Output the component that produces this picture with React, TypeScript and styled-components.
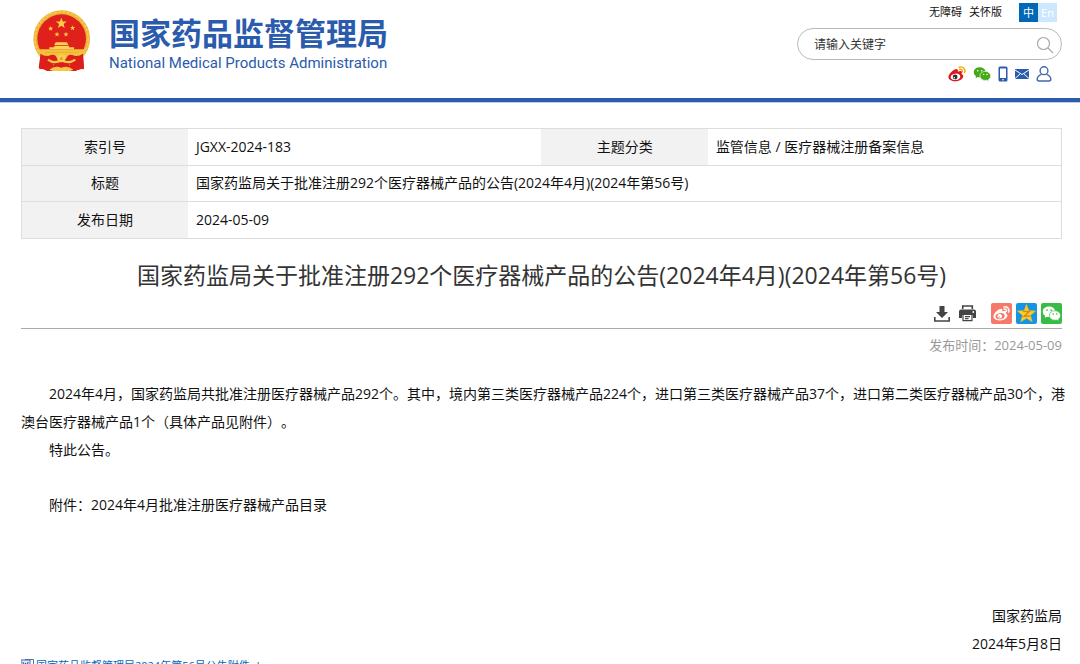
import React from 'react';
import styled, { createGlobalStyle } from 'styled-components';

const latin = '"Open Sans", "Noto Sans CJK SC", sans-serif';

const GlobalStyle = createGlobalStyle`
  * { box-sizing: border-box; }
  body {
    margin: 0;
    background: #fff;
    color: #111;
    font-family: ${latin};
    font-size: 14px;
    text-spacing-trim: space-all;
  }
  a { color: inherit; text-decoration: none; }
  button { border: 0; padding: 0; background: none; font: inherit; cursor: pointer; }
  svg { display: block; }
`;

const Page = styled.div`
  height: 100vh;
  overflow: hidden auto;
  scrollbar-width: none;
`;

const Header = styled.header`
  display: flex;
  justify-content: space-between;
  height: 103px;
  padding: 0 18px 0 32px;
  border-bottom: 1px solid #bccbe6;
  box-shadow: inset 0 -4px #2a5bac;
`;

const Brand = styled.a`
  display: flex;
  align-items: flex-start;
  gap: 17px;
  padding-top: 9px;
  color: #2a5bac;
`;

const BrandText = styled.span`
  display: flex;
  flex-direction: column;
  padding-top: 3px;
  white-space: nowrap;
`;

const BrandName = styled.span`
  font: bold 31px/40px "Noto Sans CJK SC", sans-serif;
`;

const BrandSub = styled.span`
  font: 400 15px/22px Roboto, sans-serif;
`;

const Tools = styled.div`
  display: flex;
  flex-direction: column;
  align-items: flex-end;
  width: 265px;
  padding-top: 2px;
`;

const TopLinks = styled.nav`
  display: flex;
  align-items: center;
  gap: 7px;
  padding-right: 5px;
  font-size: 11px;
  line-height: 20px;
`;

const Languages = styled.div`
  display: flex;
  margin-left: 10px;
`;

const Language = styled.button<{ $active?: boolean }>`
  width: 19px;
  height: 19px;
  font-size: 11px;
  line-height: 19px;
  color: #fff;
  background: ${(p) => (p.$active ? '#0068b7' : '#cce8ff')};
`;

const Search = styled.form`
  display: flex;
  align-items: center;
  width: 100%;
  height: 32px;
  margin-top: 6px;
  padding: 1px 7px 0 16px;
  border: 1px solid #bbb;
  border-radius: 16px;
`;

const SearchInput = styled.input`
  flex: 1;
  min-width: 0;
  padding: 0;
  border: 0;
  outline: 0;
  background: none;
  font: 12px/20px ${latin};
  &::placeholder { color: #333; opacity: 1; }
`;

const Channels = styled.div`
  display: flex;
  align-items: center;
  gap: 7px;
  padding: 5px 10px 0 0;
`;

const Main = styled.main`
  padding: 25px 18px 0 21px;
`;

const InfoTable = styled.table`
  width: 100%;
  height: 111px;
  border-collapse: collapse;
  table-layout: fixed;
  border: 1px solid #ddd;
`;

const InfoRow = styled.tr`
  border-bottom: 1px solid #ddd;
`;

const Label = styled.th`
  padding: 0;
  background: #f2f2f2;
  font-weight: 400;
  line-height: 20px;
`;

const Value = styled.td`
  padding: 0 8px;
  line-height: 20px;
`;

const Title = styled.h1`
  margin: 20px 0 0;
  color: #333;
  font-size: 23px;
  font-weight: 400;
  line-height: 32px;
  text-align: center;
`;

const ActionBar = styled.div`
  display: flex;
  justify-content: flex-end;
  align-items: center;
  height: 38px;
  padding-top: 8px;
  border-bottom: 1px solid #aaa;
`;

const Actions = styled.div<{ $gap: number }>`
  display: flex;
  align-items: center;
  gap: ${(p) => p.$gap}px;
  margin-left: 15px;
`;

const Share = styled.button<{ $color: string }>`
  display: grid;
  place-items: center;
  width: 21px;
  height: 21px;
  border-radius: 2px;
  background: ${(p) => p.$color};
`;

const Published = styled.p`
  margin: 6px 0 25px;
  color: #999;
  font-size: 13px;
  line-height: 20px;
  text-align: right;
`;

const Article = styled.article`
  margin-right: -5px;
  line-height: 28px;
`;

const Paragraph = styled.p<{ $gap?: number }>`
  margin: ${(p) => p.$gap ?? 0}px 0 0;
  text-indent: 2em;
`;

const Signature = styled.div`
  margin-top: 83px;
  line-height: 28px;
  text-align: right;
`;

const Attachment = styled.a`
  display: inline-flex;
  align-items: center;
  gap: 1px;
  color: #0068b7;
  font-size: 11px;
  line-height: 16px;
`;

const star = (cx: number, cy: number, r: number) =>
  Array.from({ length: 10 }, (_, i) => {
    const a = (Math.PI / 5) * i - Math.PI / 2;
    const d = i % 2 ? r * 0.42 : r;
    return `${(cx + d * Math.cos(a)).toFixed(1)},${(cy + d * Math.sin(a)).toFixed(1)}`;
  }).join(' ');

const Emblem = () => (
  <svg width="60" height="64" viewBox="36 25 180 190" aria-hidden="true">
    <path d="M62 158 56 200 78 208 84 202 98 210 125 204 152 210 168 202 174 208 192 200 188 156Z" fill="#dc1f1a" />
    <circle cx="125" cy="113" r="85" fill="#eeb335" />
    <circle cx="125" cy="113" r="80" fill="none" stroke="#f6cb55" strokeWidth="5" strokeDasharray="9 4" />
    <circle cx="125" cy="113" r="73" fill="#df201b" />
    <path d="M54 145H197Q190 164 170 168L125 176 80 168Q60 164 54 145Z" fill="#f4c33e" />
    <path d="M61 158Q78 170 93 162 107 158 112 174L100 190 105 210H80L72 203 58 205Z" fill="#dc1f1a" />
    <path d="M189 158Q172 170 157 162 143 158 138 174L150 190 145 210H168L178 203 192 205Z" fill="#dc1f1a" />
    <path d="M100 178H150L146 206H104Z" fill="#dc1f1a" />
    <path d="M84 176Q102 190 124 178 146 190 166 176" fill="none" stroke="#f6c746" strokeWidth="7" />
    <path d="M88 206Q104 192 124 200 144 192 160 206L150 210H98Z" fill="#f6c746" />
    <circle cx="124" cy="172" r="12" fill="#f8cf52" />
    <circle cx="124" cy="173" r="5" fill="#e9a232" />
    <path d="M107 124H141L145 132H103ZM103 134H147V139H103ZM88 139H162V145H88Z" fill="#fbd352" />
    <path d="M74 154H176" stroke="#e8a52f" strokeWidth="2" />
    <g fill="#fbd042">
      <polygon points={star(124, 67, 17)} />
      <polygon points={star(92, 83, 8)} />
      <polygon points={star(158, 81, 8)} />
      <polygon points={star(111, 100, 8)} />
      <polygon points={star(138, 100, 8)} />
    </g>
  </svg>
);

const Weibo = ({ size, body, wave, hole, pupil }: { size: number; body: string; wave: string; hole: string; pupil: string }) => (
  <svg width={size} height={size} viewBox="0 0 24 24" aria-hidden="true">
    <path d="M9 6C12 4 14 6 13 9 17 7 20 8 18 12 21 13 21 16 19 18 15 23 4 23 1 18-1 14 5 8 9 6Z" fill={body} />
    <ellipse cx="10" cy="15.800" rx="6.500" ry="4.300" fill={hole} transform="rotate(-8 10 16)" />
    <circle cx="9.500" cy="16" r="3.200" fill={pupil} />
    <circle cx="8.400" cy="17" r="1" fill={hole} />
    <path d="M15 3C20 1 24 6 22 10M15.500 6C18 5 20 7 19 9" fill="none" stroke={wave} strokeWidth="1.900" strokeLinecap="round" />
  </svg>
);

const Wechat = ({ size, color, eye }: { size: number; color: string; eye: string }) => (
  <svg width={size} height={size} viewBox="0 0 24 24" aria-hidden="true">
    <path d="M9 3C4 3 1 6 1 9.700 1 12 2 13.600 4 14.900L3.500 17.500 6.300 16C8 16.500 10 16.500 11 16L17 9C16 5 13 3 9 3Z" fill={color} />
    <path d="M16.500 8.500C12 8.500 9.300 11.300 9.300 14.500 9.300 18 12.300 20.500 16.500 20.500L18.500 20.200 21.200 21.600 20.700 19.300C22.500 18 23.500 16.500 23.500 14.500 23.500 11.300 20.500 8.500 16.500 8.500Z" fill={color} stroke={eye} strokeWidth=".8" />
    <g fill={eye}>
      <circle cx="6.400" cy="7.700" r="1.100" />
      <circle cx="11.500" cy="7.700" r="1.100" />
      <circle cx="14.200" cy="12.700" r="1" />
      <circle cx="18.700" cy="12.700" r="1" />
    </g>
  </svg>
);

const SearchIcon = () => (
  <svg width="18" height="18" viewBox="0 0 18 18" fill="none" stroke="#aaa" strokeWidth="1.200" aria-hidden="true">
    <circle cx="7.500" cy="7.500" r="6" />
    <path d="m12 12 5 5" />
  </svg>
);

const PhoneIcon = () => (
  <svg width="10" height="16" viewBox="0 0 10 16" aria-hidden="true">
    <rect x=".5" y=".5" width="9" height="15" rx="1.500" fill="#2a5bac" />
    <rect x="2" y="2.500" width="6" height="9.500" fill="#fff" />
    <circle cx="5" cy="13.700" r=".8" fill="#fff" />
  </svg>
);

const MailIcon = () => (
  <svg width="14" height="10" viewBox="0 0 14 10" aria-hidden="true">
    <rect width="14" height="10" fill="#2a5bac" />
    <path d="m0 1 7 4.500L14 1M0 9.500 5 5M14 9.500 9 5" fill="none" stroke="#fff" strokeWidth="1" />
  </svg>
);

const UserIcon = () => (
  <svg width="16" height="16" viewBox="0 0 16 16" fill="none" stroke="#4468b4" strokeWidth="1.400" aria-hidden="true">
    <circle cx="8" cy="4.700" r="3.900" />
    <path d="M5.500 8.300C3 9.300 1.200 11.500 1.200 13Q1.200 15 3 15H13Q14.800 15 14.800 13C14.800 11.500 13 9.300 10.500 8.300" />
  </svg>
);

const DownloadIcon = () => (
  <svg width="16" height="16" viewBox="0 0 16 16" aria-hidden="true">
    <path d="M5.500 0H10.500V6H14L8 12 2 6H5.500Z" fill="#444" />
    <path d="M.8 11V15H15.200V11" fill="none" stroke="#444" strokeWidth="1.600" />
  </svg>
);

const PrintIcon = () => (
  <svg width="17" height="17" viewBox="0 0 17 17" aria-hidden="true">
    <path d="M3.700 4V1H13.300V4" fill="none" stroke="#444" strokeWidth="1.600" />
    <path d="M2 4.500H15Q17 4.500 17 6.500V13H14V10H3V13H0V6.500Q0 4.500 2 4.500Z" fill="#444" />
    <circle cx="14.300" cy="7" r=".9" fill="#fff" />
    <path d="M4 9.500H13V15.700H4ZM6 11.700H11M6 13.700H9.500" fill="#fff" stroke="#444" strokeWidth="1.200" />
  </svg>
);

const QzoneIcon = () => (
  <svg width="21" height="21" viewBox="0 0 21 21" aria-hidden="true">
    <polygon points={star(10.5, 11, 9.5)} fill="#ffce2e" stroke="#f7b51c" strokeWidth=".8" strokeLinejoin="round" />
    <path d="M7 8.500H13.500L8 13.500 14 13" fill="none" stroke="#d88a10" strokeWidth="1.400" />
  </svg>
);

const DocIcon = () => (
  <svg width="14" height="14" viewBox="0 0 14 14" aria-hidden="true">
    <path d="M4 .5H12.500V13.500H4Z" fill="#fff" stroke="#5574a8" />
    <path d="M0 1H9V10H0Z" fill="#dce7fa" stroke="#4a6bb0" />
    <path d="m2 3 1 5 1.500-4L6 8l1-5" fill="none" stroke="#2a4f9c" />
  </svg>
);

export default function App() {
  return (
    <Page>
      <GlobalStyle />
      <Header>
        <Brand href="#">
          <Emblem />
          <BrandText>
            <BrandName>国家药品监督管理局</BrandName>
            <BrandSub>National Medical Products Administration</BrandSub>
          </BrandText>
        </Brand>
        <Tools>
          <TopLinks>
            <a href="#">无障碍</a>
            <a href="#">关怀版</a>
            <Languages>
              <Language type="button" $active>中</Language>
              <Language type="button">En</Language>
            </Languages>
          </TopLinks>
          <Search>
            <SearchInput type="text" placeholder="请输入关键字" aria-label="请输入关键字" />
            <button type="button" aria-label="搜索"><SearchIcon /></button>
          </Search>
          <Channels>
            <a href="#" aria-label="微博"><Weibo size={18} body="#e0161c" wave="#f5a800" hole="#fff" pupil="#333" /></a>
            <a href="#" aria-label="微信"><Wechat size={18} color="#45a818" eye="#fff" /></a>
            <a href="#" aria-label="移动客户端"><PhoneIcon /></a>
            <a href="#" aria-label="邮箱"><MailIcon /></a>
            <a href="#" aria-label="个人中心"><UserIcon /></a>
          </Channels>
        </Tools>
      </Header>
      <Main>
        <InfoTable>
          <colgroup>
            <col width="16%" />
            <col width="34%" />
            <col width="16%" />
            <col width="34%" />
          </colgroup>
          <tbody>
            <InfoRow>
              <Label scope="row">索引号</Label>
              <Value>JGXX-2024-183</Value>
              <Label scope="row">主题分类</Label>
              <Value>监管信息 / 医疗器械注册备案信息</Value>
            </InfoRow>
            <InfoRow>
              <Label scope="row">标题</Label>
              <Value colSpan={3}>国家药监局关于批准注册292个医疗器械产品的公告(2024年4月)(2024年第56号)</Value>
            </InfoRow>
            <InfoRow>
              <Label scope="row">发布日期</Label>
              <Value colSpan={3}>2024-05-09</Value>
            </InfoRow>
          </tbody>
        </InfoTable>
        <Title>国家药监局关于批准注册292个医疗器械产品的公告(2024年4月)(2024年第56号)</Title>
        <ActionBar>
          <Actions $gap={9}>
            <button type="button" aria-label="下载"><DownloadIcon /></button>
            <button type="button" aria-label="打印"><PrintIcon /></button>
          </Actions>
          <Actions $gap={4}>
            <Share type="button" $color="#f57869" aria-label="分享到微博"><Weibo size={17} body="#fff" wave="#fff" hole="#f57869" pupil="#fff" /></Share>
            <Share type="button" $color="#1296e4" aria-label="分享到QQ空间"><QzoneIcon /></Share>
            <Share type="button" $color="#37bd45" aria-label="分享到微信"><Wechat size={19} color="#fff" eye="#37bd45" /></Share>
          </Actions>
        </ActionBar>
        <Published>发布时间：2024-05-09</Published>
        <Article>
          <Paragraph>
            2024年4月，国家药监局共批准注册医疗器械产品292个。其中，境内第三类医疗器械产品224个，进口第三类医疗器械产品37个，进口第二类医疗器械产品30个，港澳台医疗器械产品1个（具体产品见附件）。
          </Paragraph>
          <Paragraph>特此公告。</Paragraph>
          <Paragraph $gap={27}>附件：2024年4月批准注册医疗器械产品目录</Paragraph>
        </Article>
        <Signature>
          国家药监局
          <br />
          2024年5月8日
        </Signature>
        <Attachment href="#">
          <DocIcon />
          国家药品监督管理局2024年第56号公告附件.doc
        </Attachment>
      </Main>
    </Page>
  );
}
